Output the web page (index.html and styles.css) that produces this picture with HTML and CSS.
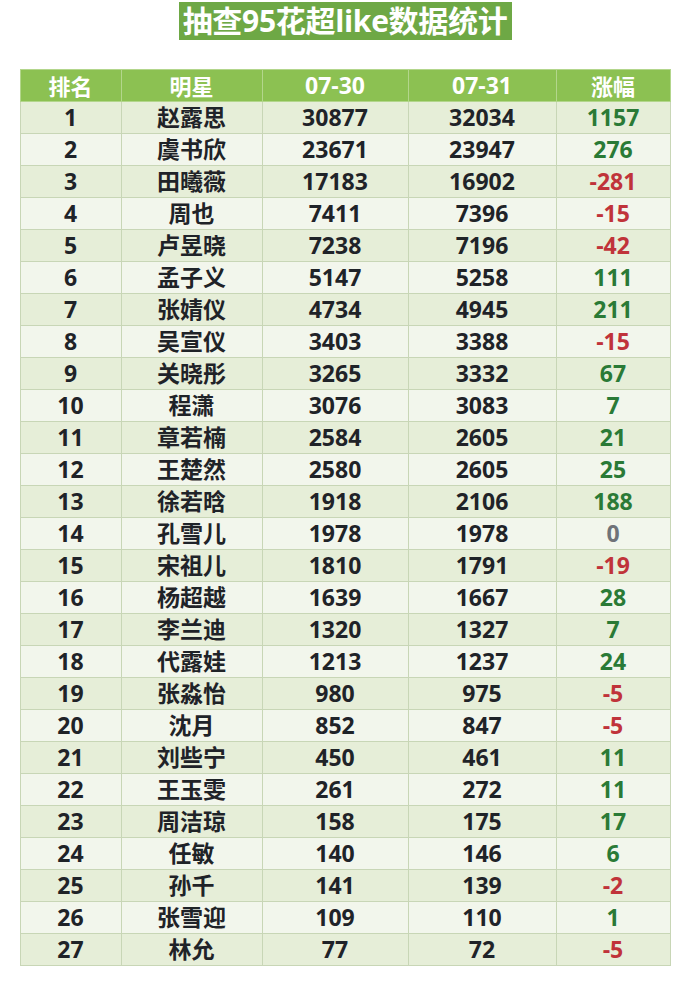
FILE: index.html
```html
<!DOCTYPE html>
<html lang="zh">
<head>
<meta charset="utf-8">
<link rel="stylesheet" href="styles.css">
</head>
<body>
<div class="page">
  <h1 class="title">抽查95花超like数据统计</h1>
  <table class="stats">
    <colgroup>
      <col class="c1"><col class="c2"><col class="c3"><col class="c4"><col class="c5">
    </colgroup>
    <thead>
      <tr><th class="cjk">排名</th><th class="cjk">明星</th><th>07-30</th><th>07-31</th><th class="cjk">涨幅</th></tr>
    </thead>
    <tbody>
      <tr><td>1</td><td>赵露思</td><td>30877</td><td>32034</td><td class="up">1157</td></tr>
      <tr><td>2</td><td>虞书欣</td><td>23671</td><td>23947</td><td class="up">276</td></tr>
      <tr><td>3</td><td>田曦薇</td><td>17183</td><td>16902</td><td class="down">-281</td></tr>
      <tr><td>4</td><td>周也</td><td>7411</td><td>7396</td><td class="down">-15</td></tr>
      <tr><td>5</td><td>卢昱晓</td><td>7238</td><td>7196</td><td class="down">-42</td></tr>
      <tr><td>6</td><td>孟子义</td><td>5147</td><td>5258</td><td class="up">111</td></tr>
      <tr><td>7</td><td>张婧仪</td><td>4734</td><td>4945</td><td class="up">211</td></tr>
      <tr><td>8</td><td>吴宣仪</td><td>3403</td><td>3388</td><td class="down">-15</td></tr>
      <tr><td>9</td><td>关晓彤</td><td>3265</td><td>3332</td><td class="up">67</td></tr>
      <tr><td>10</td><td>程潇</td><td>3076</td><td>3083</td><td class="up">7</td></tr>
      <tr><td>11</td><td>章若楠</td><td>2584</td><td>2605</td><td class="up">21</td></tr>
      <tr><td>12</td><td>王楚然</td><td>2580</td><td>2605</td><td class="up">25</td></tr>
      <tr><td>13</td><td>徐若晗</td><td>1918</td><td>2106</td><td class="up">188</td></tr>
      <tr><td>14</td><td>孔雪儿</td><td>1978</td><td>1978</td><td class="zero">0</td></tr>
      <tr><td>15</td><td>宋祖儿</td><td>1810</td><td>1791</td><td class="down">-19</td></tr>
      <tr><td>16</td><td>杨超越</td><td>1639</td><td>1667</td><td class="up">28</td></tr>
      <tr><td>17</td><td>李兰迪</td><td>1320</td><td>1327</td><td class="up">7</td></tr>
      <tr><td>18</td><td>代露娃</td><td>1213</td><td>1237</td><td class="up">24</td></tr>
      <tr><td>19</td><td>张淼怡</td><td>980</td><td>975</td><td class="down">-5</td></tr>
      <tr><td>20</td><td>沈月</td><td>852</td><td>847</td><td class="down">-5</td></tr>
      <tr><td>21</td><td>刘些宁</td><td>450</td><td>461</td><td class="up">11</td></tr>
      <tr><td>22</td><td>王玉雯</td><td>261</td><td>272</td><td class="up">11</td></tr>
      <tr><td>23</td><td>周洁琼</td><td>158</td><td>175</td><td class="up">17</td></tr>
      <tr><td>24</td><td>任敏</td><td>140</td><td>146</td><td class="up">6</td></tr>
      <tr><td>25</td><td>孙千</td><td>141</td><td>139</td><td class="down">-2</td></tr>
      <tr><td>26</td><td>张雪迎</td><td>109</td><td>110</td><td class="up">1</td></tr>
      <tr><td>27</td><td>林允</td><td>77</td><td>72</td><td class="down">-5</td></tr>
    </tbody>
  </table>
</div>
</body>
</html>
```

FILE: styles.css
```css
html, body {
  margin: 0;
  padding: 0;
  background: #ffffff;
}

.page {
  width: 690px;
  padding-top: 2px;
  display: flex;
  flex-direction: column;
  align-items: center;
  font-family: "Open Sans", "Noto Sans CJK SC", sans-serif;
}

.title {
  margin: 0;
  width: 333px;
  height: 38px;
  box-sizing: border-box;
  background: #6ea845;
  color: #ffffff;
  font-size: 30px;
  font-weight: 700;
  line-height: 38px;
  text-align: center;
  white-space: nowrap;
  letter-spacing: -0.3px;
}

.stats {
  margin-top: 29px;
  width: 650px;
  border-collapse: collapse;
  table-layout: fixed;
  border: 1px solid #c8d6b6;
}

.c1 { width: 101px; }
.c2 { width: 141px; }
.c3 { width: 146px; }
.c4 { width: 148px; }
.c5 { width: 114px; }

.stats th,
.stats td {
  padding: 0;
  height: 31px;
  text-align: center;
  vertical-align: middle;
  border: 1px solid #c8d6b6;
  font-weight: 700;
  line-height: 1;
}

.stats th {
  background: #8cc152;
  color: #ffffff;
  font-size: 23px;
  border-color: #b3d68c;
}

.stats th.cjk {
  font-size: 22px;
}

.stats td {
  font-size: 23px;
  color: #1f2328;
}

.stats tbody tr:nth-child(odd) td {
  background: #e6eed8;
}

.stats tbody tr:nth-child(even) td {
  background: #f2f6ec;
}

.stats td.up { color: #2a7a36; }
.stats td.down { color: #c0333a; }
.stats td.zero { color: #6f7378; }
```
